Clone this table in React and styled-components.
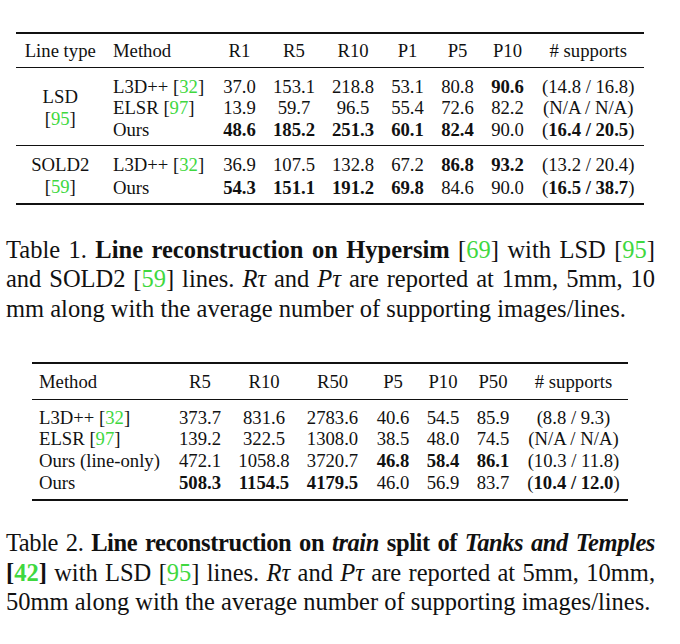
import React from 'react'
import styled, { createGlobalStyle } from 'styled-components'

const GlobalStyle = createGlobalStyle`
  body {
    margin: 0;
    background: #fff;
    color: #111;
    font-family: "Liberation Serif", "Times New Roman", serif;
  }
`

const Page = styled.div`
  width: 680px;
  padding-top: 32px;
`

const Table = styled.table`
  border-collapse: collapse;
  table-layout: fixed;
  width: ${p => p.$width}px;
  margin-left: ${p => p.$left}px;
  margin-top: ${p => p.$top || 0}px;
  font-size: 18.7px;
  border-top: 2px solid #111;
  border-bottom: 2px solid #111;
`

const Col = styled.col`
  width: ${p => p.$w}px;
`

const Head = styled.thead`
  border-bottom: 1.5px solid #111;
`

const Th = styled.th`
  font-weight: normal;
  height: ${p => p.$h}px;
  line-height: ${p => p.$h}px;
  padding: 0 0 0 ${p => p.$pad || 0}px;
  text-align: ${p => p.$align || 'center'};
  white-space: nowrap;
`

const Group = styled.tbody`
  & + & {
    border-top: 1.5px solid #111;
  }
  & > tr:first-child > td {
    padding-top: ${p => p.$padTop}px;
  }
  & > tr:last-child > td,
  & > tr > td[rowspan] {
    padding-bottom: ${p => p.$padBottom}px;
  }
`

const Td = styled.td`
  line-height: ${p => p.$lh}px;
  padding: 0 0 0 ${p => p.$pad || 0}px;
  text-align: ${p => p.$align || 'center'};
  vertical-align: middle;
  white-space: nowrap;
`

const Cite = styled.span`
  color: #3fd83f;
`

const B = styled.b`
  font-weight: 700;
`

const Caption = styled.div`
  width: 649px;
  margin-left: 6px;
  margin-top: ${p => p.$top}px;
  font-size: 24.5px;
  line-height: 29.5px;
`

const Line = styled.div`
  white-space: nowrap;
  text-align: ${p => (p.$full ? 'justify' : 'left')};
  text-align-last: ${p => (p.$full ? 'justify' : 'left')};
  letter-spacing: ${p => p.$spacing || 0}px;
  word-spacing: ${p => p.$words || 0}px;
`

const MathVar = styled.i`
  font-style: italic;
`

const BoldItalic = styled.b`
  font-weight: 700;
  font-style: italic;
`

// '*' in front of a value marks it bold
const Val = ({ v }) => (v.startsWith('*') ? <B>{v.slice(1)}</B> : v)

const Supports = ({ s }) =>
  s.startsWith('*') ? <>(<B>{s.slice(1)}</B>)</> : `(${s})`

const Method = ({ name, cite }) =>
  cite ? <>{name} [<Cite>{cite}</Cite>]</> : name

const table1 = [
  {
    type: 'LSD',
    cite: '95',
    rows: [
      { method: 'L3D++', cite: '32', vals: ['37.0', '153.1', '218.8', '53.1', '80.8', '*90.6'], sup: '14.8 / 16.8' },
      { method: 'ELSR', cite: '97', vals: ['13.9', '59.7', '96.5', '55.4', '72.6', '82.2'], sup: 'N/A / N/A' },
      { method: 'Ours', vals: ['*48.6', '*185.2', '*251.3', '*60.1', '*82.4', '90.0'], sup: '*16.4 / 20.5' },
    ],
  },
  {
    type: 'SOLD2',
    cite: '59',
    rows: [
      { method: 'L3D++', cite: '32', vals: ['36.9', '107.5', '132.8', '67.2', '*86.8', '*93.2'], sup: '13.2 / 20.4' },
      { method: 'Ours', vals: ['*54.3', '*151.1', '*191.2', '*69.8', '84.6', '90.0'], sup: '*16.5 / 38.7' },
    ],
  },
]

const table2 = [
  { method: 'L3D++', cite: '32', vals: ['373.7', '831.6', '2783.6', '40.6', '54.5', '85.9'], sup: '8.8 / 9.3' },
  { method: 'ELSR', cite: '97', vals: ['139.2', '322.5', '1308.0', '38.5', '48.0', '74.5'], sup: 'N/A / N/A' },
  { method: 'Ours (line-only)', vals: ['472.1', '1058.8', '3720.7', '*46.8', '*58.4', '*86.1'], sup: '10.3 / 11.8' },
  { method: 'Ours', vals: ['*508.3', '*1154.5', '*4179.5', '46.0', '56.9', '83.7'], sup: '*10.4 / 12.0' },
]

const cols1 = [88.5, 110, 50, 59, 59, 50, 50, 50, 111.5]
const cols2 = [138, 60, 68, 69, 52, 48, 52, 109]

function LineTable() {
  return (
    <Table $width={628} $left={16}>
      <colgroup>
        {cols1.map((w, i) => <Col key={i} $w={w} />)}
      </colgroup>
      <Head>
        <tr>
          <Th $h={33}>Line type</Th>
          <Th $h={33} $align="left" $pad={8.5}>Method</Th>
          {['R1', 'R5', 'R10', 'P1', 'P5', 'P10', '# supports'].map(h => (
            <Th key={h} $h={33}>{h}</Th>
          ))}
        </tr>
      </Head>
      {table1.map(group => (
        <Group key={group.type} $padTop={7.5} $padBottom={4.5}>
          {group.rows.map((row, i) => (
            <tr key={i}>
              {i === 0 && (
                <Td $lh={22.5} rowSpan={group.rows.length}>
                  {group.type}<br />[<Cite>{group.cite}</Cite>]
                </Td>
              )}
              <Td $lh={21.7} $align="left" $pad={8.5}>
                <Method name={row.method} cite={row.cite} />
              </Td>
              {row.vals.map((v, j) => (
                <Td key={j} $lh={21.7}><Val v={v} /></Td>
              ))}
              <Td $lh={21.7}><Supports s={row.sup} /></Td>
            </tr>
          ))}
        </Group>
      ))}
    </Table>
  )
}

function TanksTable() {
  return (
    <Table $width={596} $left={32} $top={38.5}>
      <colgroup>
        {cols2.map((w, i) => <Col key={i} $w={w} />)}
      </colgroup>
      <Head>
        <tr>
          <Th $h={35} $align="left" $pad={7}>Method</Th>
          {['R5', 'R10', 'R50', 'P5', 'P10', 'P50', '# supports'].map(h => (
            <Th key={h} $h={35}>{h}</Th>
          ))}
        </tr>
      </Head>
      <Group $padTop={7} $padBottom={6}>
        {table2.map((row, i) => (
          <tr key={i}>
            <Td $lh={21.7} $align="left" $pad={7}>
              <Method name={row.method} cite={row.cite} />
            </Td>
            {row.vals.map((v, j) => (
              <Td key={j} $lh={21.7}><Val v={v} /></Td>
            ))}
            <Td $lh={21.7}><Supports s={row.sup} /></Td>
          </tr>
        ))}
      </Group>
    </Table>
  )
}

export default function App() {
  return (
    <Page>
      <GlobalStyle />
      <LineTable />
      <Caption $top={29.5}>
        <Line $full>
          Table 1. <B>Line reconstruction on Hypersim</B> [<Cite>69</Cite>] with LSD [<Cite>95</Cite>]
        </Line>
        <Line $full>
          and SOLD2 [<Cite>59</Cite>] lines. <MathVar>Rτ</MathVar> and <MathVar>Pτ</MathVar> are reported at 1mm, 5mm, 10
        </Line>
        <Line>mm along with the average number of supporting images/lines.</Line>
      </Caption>
      <TanksTable />
      <Caption $top={27}>
        <Line $full $spacing={-0.4}>
          Table 2. <B>Line reconstruction on <BoldItalic>train</BoldItalic> split of <BoldItalic>Tanks and Temples</BoldItalic></B>
        </Line>
        <Line $full>
          <B>[<Cite>42</Cite>]</B> with LSD [<Cite>95</Cite>] lines. <MathVar>Rτ</MathVar> and <MathVar>Pτ</MathVar> are reported at 5mm, 10mm,
        </Line>
        <Line>50mm along with the average number of supporting images/lines.</Line>
      </Caption>
    </Page>
  )
}
